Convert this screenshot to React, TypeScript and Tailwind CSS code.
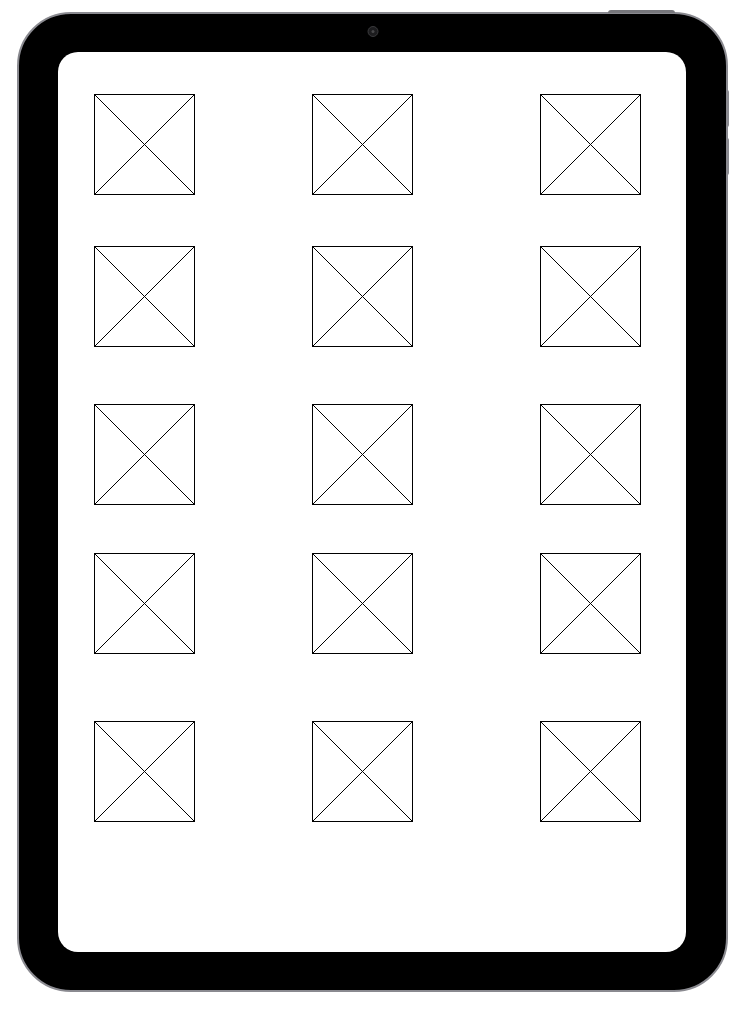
import React from "react";

const Placeholder = () => (
  <div className="w-[101px] h-[101px] border border-black bg-white">
    <svg width="99" height="99" viewBox="0 0 99 99" className="block">
      <line x1="0" y1="0" x2="99" y2="99" stroke="black" strokeWidth="1" />
      <line x1="99" y1="0" x2="0" y2="99" stroke="black" strokeWidth="1" />
    </svg>
  </div>
);

export default function App() {
  const cells = Array.from({ length: 15 });
  return (
    <div className="w-[746px] h-[1011px] bg-white pt-[12px] pl-[17px]">
      <div className="relative w-[711px] h-[980px] rounded-[54px] bg-black border-2 border-[#8a8a90] pt-[38px] pl-[39px]">
        {/* top button */}
        <div className="absolute -top-[4px] left-[589px] w-[67px] h-[3px] rounded-t-sm bg-[#77777c]" />
        {/* side buttons */}
        <div className="absolute -right-[3px] top-[76px] w-[2px] h-[37px] rounded-r-sm bg-[#8a8a90]" />
        <div className="absolute -right-[3px] top-[124px] w-[2px] h-[37px] rounded-r-sm bg-[#8a8a90]" />
        {/* camera */}
        <div className="absolute top-[12px] left-1/2 -translate-x-1/2 w-[11px] h-[11px] rounded-full bg-[#1c1c1e] border border-[#3a3a3c] flex items-center justify-center">
          <div className="w-[3px] h-[3px] rounded-full bg-[#48484a]" />
        </div>

        {/* screen */}
        <div className="w-[628px] h-[900px] rounded-[20px] bg-white pt-[42px] pl-[36px]">
          <div className="grid grid-cols-[218px_228px_101px] grid-rows-[152px_158px_149px_168px_101px]">
            {cells.map((_, i) => (
              <Placeholder key={i} />
            ))}
          </div>
        </div>
      </div>
    </div>
  );
}
